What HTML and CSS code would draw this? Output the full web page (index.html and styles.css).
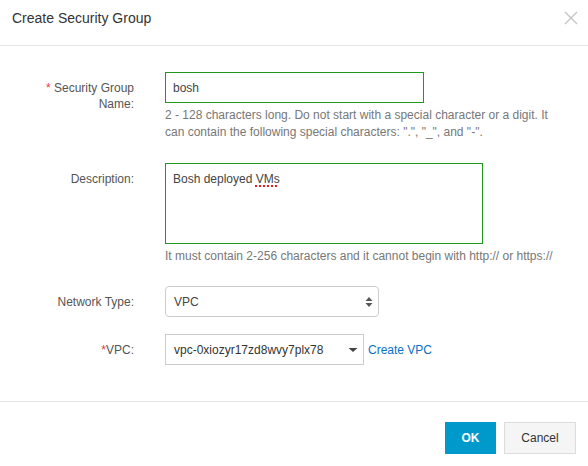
FILE: index.html
```html
<!DOCTYPE html>
<html>
<head>
<meta charset="utf-8">
<link rel="stylesheet" href="styles.css">
</head>
<body>
<div class="dialog">
  <div class="header">
    <div class="title">Create Security Group</div>
    <svg class="close" width="14" height="14" viewBox="0 0 14 14"><path d="M1 1L13 13M13 1L1 13" stroke="#c4c4c4" stroke-width="1.4" fill="none"/></svg>
  </div>
  <div class="form">
    <div class="row">
      <div class="label"><span class="req">*</span> Security Group Name:</div>
      <div class="control">
        <div class="input green w-name"><span>bosh</span></div>
        <div class="help">2 - 128 characters long. Do not start with a special character or a digit. It<br>can contain the following special characters: ".", "_", and "-".</div>
      </div>
    </div>
    <div class="row r2">
      <div class="label">Description:</div>
      <div class="control">
        <div class="textarea green"><span>Bosh deployed <span class="spell">VMs</span></span></div>
        <div class="help">It must contain 2-256 characters and it cannot begin with http:// or https://</div>
      </div>
    </div>
    <div class="row r3">
      <div class="label">Network Type:</div>
      <div class="control">
        <div class="select round">
          <span>VPC</span>
          <svg width="8" height="12" viewBox="0 0 8 12"><path d="M4 1L7.5 5H0.5Z M4 11L7.5 7H0.5Z" fill="#555"/></svg>
        </div>
      </div>
    </div>
    <div class="row r4">
      <div class="label"><span class="req">*</span>VPC:</div>
      <div class="control inline">
        <div class="select square">
          <span>vpc-0xiozyr17zd8wvy7plx78</span>
          <svg width="10" height="6" viewBox="0 0 10 6"><path d="M0.5 1H9.5L5 5Z" fill="#444"/></svg>
        </div>
        <a class="link">Create VPC</a>
      </div>
    </div>
  </div>
  <div class="footer">
    <button class="btn ok">OK</button>
    <button class="btn cancel">Cancel</button>
  </div>
</div>
</body>
</html>
```

FILE: styles.css
```css
* { box-sizing: border-box; }
html, body { margin: 0; padding: 0; background: #fff; }
body { font-family: "Liberation Sans", Arial, sans-serif; font-size: 12px; color: #333; }
.dialog { width: 588px; height: 466px; }
.header {
  height: 46px;
  border-bottom: 1px solid #e5e5e5;
  display: flex;
  align-items: flex-start;
  justify-content: space-between;
  padding: 10px 10px 0 12px;
}
.title { font-size: 14px; line-height: 17px; color: #333; }
.close { margin-top: 1px; }
.form { padding: 26px 0 0 0; height: 355px; }
.row { display: flex; }
.r2 { margin-top: 22px; }
.r3 { margin-top: 21px; }
.r4 { margin-top: 17px; }
.label {
  width: 100px;
  margin-left: 34px;
  text-align: right;
  padding-top: 8px;
  line-height: 16px;
  color: #555;
}
.req { color: #e4393c; }
.control { margin-left: 31px; }
.control.inline { display: flex; align-items: center; }
.input, .textarea, .select {
  display: flex;
  padding-left: 7px;
  color: #444;
  font-size: 12px;
}
.green { border: 1px solid #1f9a1f; }
.input { width: 259px; height: 31px; align-items: center; }
.textarea { width: 318px; height: 81px; padding-top: 7px; line-height: 16px; }
.spell { text-decoration: underline dotted #e02020; text-decoration-thickness: 2px; text-underline-offset: 2px; }
.help { margin-top: 4px; line-height: 17px; color: #777; font-size: 12px; white-space: nowrap; }
.select {
  height: 31px;
  align-items: center;
  justify-content: space-between;
  border: 1px solid #ccc;
  padding-left: 8px;
}
.select.round { width: 214px; border-radius: 4px; padding-right: 5px; }
.select.square { width: 199px; padding-right: 5px; color: #333; }
.link { margin-left: 4px; color: #0a6fc7; font-size: 12px; }
.footer {
  border-top: 1px solid #e5e5e5;
  display: flex;
  justify-content: flex-end;
  gap: 8px;
  padding: 20px 12px 0 0;
}
.btn {
  height: 32px;
  font-family: "Liberation Sans", Arial, sans-serif;
  font-size: 12px;
  border-radius: 0;
  padding: 0;
}
.ok { width: 51px; background: #0099cc; border: 1px solid #0099cc; color: #fff; font-weight: bold; }
.cancel { width: 72px; background: #f5f5f5; border: 1px solid #dcdcdc; color: #333; }
```
